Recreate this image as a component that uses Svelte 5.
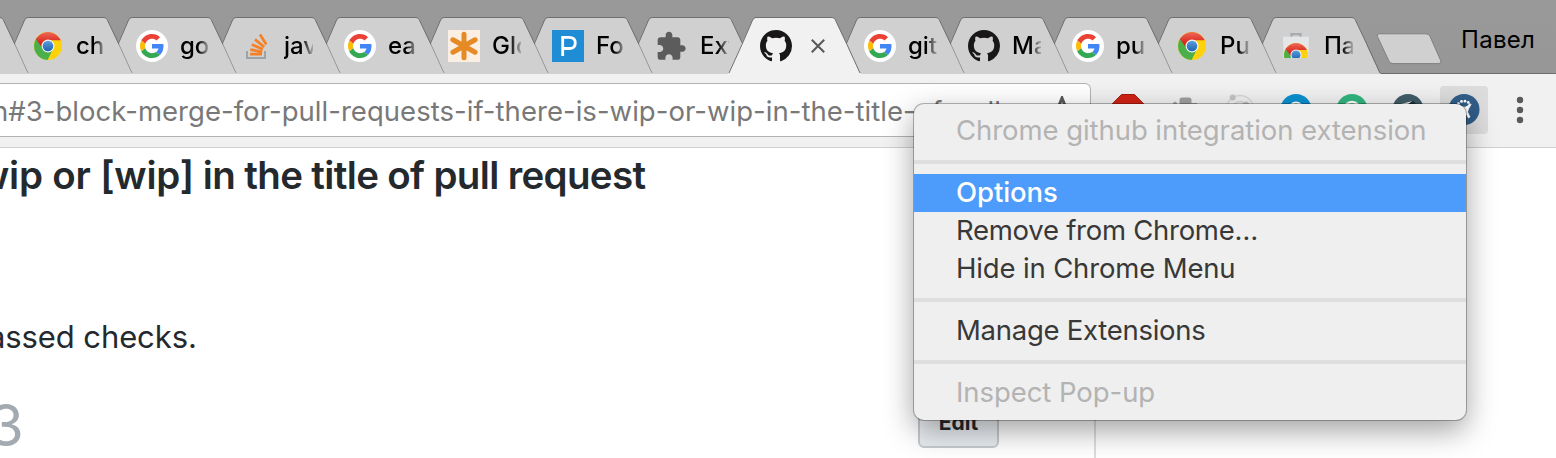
<script>
  const tabs = [
    { icon: 'none', title: '' },
    { icon: 'chrome', title: 'ch' },
    { icon: 'google', title: 'go' },
    { icon: 'stack', title: 'jav' },
    { icon: 'google', title: 'eas' },
    { icon: 'star', title: 'Glo' },
    { icon: 'p', title: 'Fo' },
    { icon: 'puzzle', title: 'Ext' },
    { icon: 'github', title: '', active: true },
    { icon: 'google', title: 'git' },
    { icon: 'github', title: 'Ma' },
    { icon: 'google', title: 'pu' },
    { icon: 'chrome', title: 'Pu' },
    { icon: 'store', title: 'Па' }
  ];
  const menu = [
    { label: 'Chrome github integration extension', kind: 'disabled' },
    null,
    { label: 'Options', kind: 'selected' },
    { label: 'Remove from Chrome…', kind: 'tighter' },
    { label: 'Hide in Chrome Menu', kind: 'tight' },
    null,
    { label: 'Manage Extensions', kind: 'tighter' },
    null,
    { label: 'Inspect Pop-up', kind: 'disabled' }
  ];
</script>

{#snippet chromeBall()}
  <circle cx="16" cy="16" r="14" fill="#fdd20a" />
  <path d="M3.9 9 A14 14 0 0 0 15.6 30 L21 19 L16 16 L11 19 L4.6 8 Z" fill="#4bb04a" />
  <path d="M3.9 9 A14 14 0 0 1 28.1 9 L28.7 10.3 H16 L11 19 Z" fill="url(#cred)" />
  <circle cx="16" cy="16" r="6.5" fill="#f4f6f8" />
  <circle cx="16" cy="16" r="5.3" fill="url(#cblue)" />
{/snippet}

<svg class="defs" aria-hidden="true">
  <defs>
    <linearGradient id="cred" x1="0" y1="0" x2="0" y2="1"><stop offset="0" stop-color="#ee6a5a" /><stop offset=".6" stop-color="#db2a20" /><stop offset="1" stop-color="#cf1c15" /></linearGradient>
    <linearGradient id="cblue" x1="0" y1="0" x2="0" y2="1"><stop offset="0" stop-color="#5c9edb" /><stop offset="1" stop-color="#1b64b4" /></linearGradient>
  </defs>
</svg>

<div class="window">
  <header class="strip">
    <div class="tabs">
      {#each tabs as tab, i}
        <div class="tab" class:active={tab.active} style="z-index: {tab.active ? 40 : 30 - i}">
          <svg class="shape" width="134" height="57" viewBox="0 0 134 57">
            <path class="fill" d="M0 57 L1 55.5 L24.6 3 Q25.8 .5 28 .5 H104 Q106.2 .5 107.2 2.6 L131.5 55.5 L133 57 Z" />
            <path class="low" d="M119 27.5 L132 56 M1 56 L14 27.5" />
            <path class="high" d="M14 27.5 L24.6 3 Q25.8 .5 28 .5 H104 Q106.2 .5 107.2 2.6 L119 27.5" />
            {#if i === tabs.length - 1}<path class="high" d="M119 27.5 L132 56" />{/if}
          </svg>
          <div class="content">
            {#if tab.icon === 'chrome'}
              <svg class="icon" viewBox="0 0 32 32">{@render chromeBall()}</svg>
            {:else if tab.icon === 'google'}
              <svg class="icon" viewBox="0 0 32 32">
                <circle cx="16" cy="16" r="16" fill="#fff" />
                <g transform="translate(4 4) scale(.5)">
                  <path fill="#EA4335" d="M24 9.5c3.54 0 6.71 1.22 9.21 3.6l6.85-6.85C35.9 2.38 30.47 0 24 0 14.62 0 6.51 5.38 2.56 13.22l7.98 6.19C12.43 13.72 17.74 9.5 24 9.5z" />
                  <path fill="#4285F4" d="M46.98 24.55c0-1.57-.15-3.09-.38-4.55H24v9.02h12.94c-.58 2.96-2.26 5.48-4.78 7.18l7.73 6c4.51-4.18 7.09-10.36 7.09-17.65z" />
                  <path fill="#FBBC05" d="M10.53 28.59c-.48-1.45-.76-2.99-.76-4.59s.27-3.14.76-4.59l-7.98-6.19C.92 16.46 0 20.12 0 24c0 3.88.92 7.54 2.56 10.78l7.97-6.19z" />
                  <path fill="#34A853" d="M24 48c6.48 0 11.93-2.13 15.89-5.81l-7.73-6c-2.15 1.45-4.92 2.3-8.16 2.3-6.26 0-11.57-4.22-13.47-9.91l-7.98 6.19C6.51 42.62 14.62 48 24 48z" />
                </g>
              </svg>
            {:else if tab.icon === 'stack'}
              <svg class="icon" viewBox="0 0 32 32" fill="none">
                <path d="M7 21 V28 H25 V21" stroke="#9ba1a6" stroke-width="1.9" />
                <path d="M10 24.1 H22 M10.3 19.6 L22.2 21.8 M11.8 14.6 L22.8 19.2 M15 9.4 L24.2 17 M20 4.6 L26.3 14.4" stroke="#f58025" stroke-width="2.7" />
              </svg>
            {:else if tab.icon === 'star'}
              <svg class="icon" viewBox="0 0 32 32">
                <rect width="32" height="32" fill="#fbefe4" />
                <path d="M16 4.2 V27.8 M4.9 9.8 L27.1 22.2 M27.1 9.8 L4.9 22.2" stroke="#e58a25" stroke-width="5" stroke-linecap="round" />
              </svg>
            {:else if tab.icon === 'p'}
              <svg class="icon" viewBox="0 0 32 32">
                <rect width="32" height="32" fill="#1f8dd6" />
                <path d="M10.7 26 V7.4 H17 Q23.3 7.4 23.3 12.9 Q23.3 18.5 17 18.5 H10.7" fill="none" stroke="#fff" stroke-width="2.8" />
              </svg>
            {:else if tab.icon === 'puzzle'}
              <svg class="icon" viewBox="0 0 32 32">
                <path transform="translate(-1 .5) scale(1.333)" fill="#5c5c5c" d="M20.5 11H19V7c0-1.1-.9-2-2-2h-4V3.5C13 2.12 11.88 1 10.5 1S8 2.12 8 3.5V5H4c-1.1 0-1.99.9-1.99 2v3.8H3.5c1.49 0 2.7 1.21 2.7 2.7s-1.21 2.7-2.7 2.7H2V20c0 1.1.9 2 2 2h3.8v-1.5c0-1.49 1.21-2.7 2.7-2.7 1.49 0 2.7 1.21 2.7 2.7V22H17c1.1 0 2-.9 2-2v-4h1.5c1.38 0 2.5-1.12 2.5-2.5S21.88 11 20.5 11z" />
              </svg>
            {:else if tab.icon === 'github'}
              <svg class="icon" viewBox="0 0 16 16">
                <path fill="#191717" fill-rule="evenodd" d="M8 0C3.58 0 0 3.58 0 8c0 3.54 2.29 6.53 5.47 7.59.4.07.55-.17.55-.38 0-.19-.01-.82-.01-1.49-2.01.37-2.53-.49-2.69-.94-.09-.23-.48-.94-.82-1.13-.28-.15-.68-.52-.01-.53.63-.01 1.08.58 1.23.82.72 1.21 1.87.87 2.33.66.07-.52.28-.87.51-1.07-1.78-.2-3.64-.89-3.64-3.95 0-.87.31-1.59.82-2.15-.08-.2-.36-1.02.08-2.12 0 0 .67-.21 2.2.82.64-.18 1.32-.27 2-.27s1.36.09 2 .27c1.53-1.04 2.2-.82 2.2-.82.44 1.1.16 1.92.08 2.12.51.56.82 1.27.82 2.15 0 3.07-1.87 3.75-3.65 3.95.29.25.54.73.54 1.48 0 1.07-.01 1.93-.01 2.2 0 .21.15.46.55.38A8.01 8.01 0 0 0 16 8c0-4.42-3.58-8-8-8z" />
              </svg>
            {:else if tab.icon === 'store'}
              <svg class="icon" viewBox="0 0 32 32">
                <path d="M11.5 7 V4.2 H20.5 V7" fill="none" stroke="#a9abad" stroke-width="2.2" />
                <path d="M3 6.8 H29 L28.3 28 H3.7 Z" fill="#e4e6e8" />
                <svg x="4" y="13" width="24" height="15" viewBox="2 2 28 17.5">{@render chromeBall()}</svg>
              </svg>
            {/if}
            {#if tab.active}
              <svg class="close" viewBox="0 0 14 14"><path d="M.8 .8 L13.2 13.2 M13.2 .8 L.8 13.2" stroke="#5a5a5a" stroke-width="2.1" /></svg>
            {:else}
              <span class="title">{tab.title}</span>
            {/if}
          </div>
        </div>
      {/each}
    </div>
    <svg class="newtab" width="66" height="32" viewBox="0 0 66 32">
      <path d="M3 .8 H50 Q52.8 .8 54 3.4 L64.6 27.4 Q65.6 30.4 63 30.6 H17 Q14.2 30.6 13 28.2 L1.4 3.4 Q.6 1 3 .8 Z" fill="#d0d0d0" stroke="#808080" stroke-width="1" />
    </svg>
    <span class="profile">Павел</span>
  </header>

  <div class="toolbar">
    <div class="omnibox">
      <span class="url">n#3-block-merge-for-pull-requests-if-there-is-wip-or-wip-in-the-title-of-pull</span>
      <svg class="bookmark" viewBox="0 0 32 32"><path d="M16 2 L20 12 L30 12.8 L22.4 19.4 L24.8 29.6 L16 24 L7.2 29.6 L9.6 19.4 L2 12.8 L12 12 Z" fill="none" stroke="#5a5a5a" stroke-width="3" /></svg>
    </div>
    <div class="extensions">
      <svg viewBox="0 0 32 32"><path d="M9.6 .5 H22.4 L31.5 9.6 V22.4 L22.4 31.5 H9.6 L.5 22.4 V9.6 Z" fill="#d22215" stroke="#9f1a10" /></svg>
      <svg viewBox="0 0 32 32"><rect x="11.5" y="3.5" width="12" height="14" rx="2.5" fill="#a0a0a0" /><path d="M5 16 V9 Q7 6 9 9 V16 Z M22 9 H29 V16 H22 Z" fill="#aaa" /></svg>
      <svg viewBox="0 0 32 32" fill="none" stroke="#d8d8d8" stroke-width="1.4"><circle cx="16" cy="15" r="13.5" /><circle cx="16" cy="15" r="7.5" /><circle cx="8.7" cy="3.5" r="3" fill="#c4c4c4" stroke="none" /><circle cx="22" cy="10.5" r="3" fill="#c4c4c4" stroke="none" /></svg>
      <svg viewBox="0 0 32 32"><circle cx="16" cy="15.5" r="15.5" fill="#0a90d0" /><circle cx="16" cy="15" r="6.5" fill="none" stroke="#fff" stroke-width="2" /></svg>
      <svg viewBox="0 0 32 32"><circle cx="16" cy="15.5" r="15.5" fill="#32b57f" /><circle cx="16" cy="16" r="8" fill="none" stroke="#fff" stroke-width="2.5" /></svg>
      <svg viewBox="0 0 32 32"><circle cx="16" cy="15.5" r="15.5" fill="#415d68" /><path d="M5 11 L21 7 L17 12 Z" fill="#fff" /><path d="M16 10 L21 6.5 L24 10 Z" fill="#22333b" /></svg>
      <div class="pressed">
        <svg viewBox="0 0 32 32"><circle cx="16" cy="15.5" r="15.5" fill="#305d88" /><path d="M15 24 L16.5 15 Q13 14 10 11 Q14 13 17 13.3 Q19 13 22 9.5 L23 10.5 Q20 15 19.5 18 L22 23 L20.5 24 L18 19.5 L16 24 Z" fill="#fff" stroke="#fff" stroke-width=".8" /><g fill="#fff"><circle cx="10.5" cy="9.5" r="1.3" /><circle cx="13.5" cy="7.4" r="1.4" /><circle cx="17" cy="7.2" r="1.4" /><circle cx="20.3" cy="8.4" r="1.3" /></g></svg>
      </div>
    </div>
    <svg class="dots" viewBox="0 0 8 28"><circle cx="4" cy="4" r="3.2" /><circle cx="4" cy="14" r="3.2" /><circle cx="4" cy="24" r="3.2" /></svg>
  </div>

  <main>
    <div class="article">
      <h2><span class="left">wip or [wip]</span><span class="right">in the title of pull request</span></h2>
      <p>assed checks.</p>
      <div class="issue"><span class="number">3</span><button>Edit</button></div>
    </div>
  </main>

  <div class="menu">
    {#each menu as item}
      {#if item}<div class="item {item.kind}">{item.label}</div>{:else}<div class="sep"></div>{/if}
    {/each}
  </div>
</div>

<style>
  :global(body) { margin: 0; overflow: hidden; }
  .defs { position: absolute; width: 0; height: 0; }
  .window { position: relative; width: 1556px; height: 458px; overflow: hidden; background: #fff; font-family: Inter, "Liberation Sans", sans-serif; display: flex; flex-direction: column; }
  .strip { box-sizing: border-box; height: 74px; flex: none; padding-top: 17px; background: linear-gradient(#999, #979797); border-bottom: 1px solid #6c6c6c; display: flex; align-items: flex-start; }
  .tabs { display: flex; margin-left: -104px; flex: none; position: relative; }
  .tab { position: relative; width: 132px; height: 56px; margin-right: -28px; flex: none; }
  .tab.active { height: 57px; }
  .shape { position: absolute; left: 0; top: 0; display: block; }
  .fill { fill: #d0d0d0; }
  .active .fill { fill: #f1f1f1; }
  .low { stroke: #979797; fill: none; }
  .high, .active .low { stroke: #6f6f6f; fill: none; }
  .content { position: relative; display: flex; align-items: center; padding: 13px 0 0 32px; height: 32px; }
  .icon { width: 32px; height: 32px; flex: none; display: block; }
  .title { margin-left: 12px; width: 29px; flex: none; overflow: hidden; white-space: nowrap; font-size: 24px; font-weight: 450; line-height: 32px; color: #000; -webkit-mask-image: linear-gradient(90deg, #000 62%, transparent 108%); mask-image: linear-gradient(90deg, #000 62%, transparent 108%); }
  .close { width: 14px; height: 14px; margin-left: 19px; }
  .newtab { margin: 16px 0 0 24px; flex: none; }
  .profile { margin: 8px 0 0 19px; font-size: 24px; line-height: 30px; letter-spacing: .3px; color: #000; }

  .toolbar { box-sizing: border-box; height: 74px; flex: none; background: #f1f1f1; border-bottom: 1px solid #cfcfcf; padding-top: 9px; display: flex; align-items: flex-start; }
  .omnibox { box-sizing: border-box; width: 1091px; height: 54px; background: #fff; border: 1px solid #b3b3b3; border-left: 0; border-radius: 0 6px 6px 0; display: flex; align-items: center; overflow: hidden; flex: none; }
  .url { width: 1016px; margin-left: -8px; font-size: 27.5px; line-height: 52px; letter-spacing: .04px; color: #787878; white-space: nowrap; flex: none; margin-top: 1px; overflow: hidden; }
  .bookmark { width: 32px; height: 32px; margin-left: 38px; margin-top: 4px; flex: none; }
  .extensions { display: flex; gap: 24px; margin: 11px 0 0 21px; }
  .extensions svg { width: 32px; height: 32px; display: block; flex: none; }
  .pressed { margin: -8px; padding: 8px; background: #dcdcdc; border-radius: 4px; }
  .dots { width: 8px; height: 28px; margin: 13px 0 0 36px; fill: #5a5a5a; }

  main { flex: 1; display: flex; min-height: 0; }
  .article { box-sizing: border-box; width: 1096px; border-right: 2px solid #ddd; color: #24292e; display: flex; flex-direction: column; }
  h2 { margin: 2px 0 0 -23px; font-size: 38.5px; font-weight: 600; line-height: 50px; white-space: nowrap; display: flex; gap: 9px; }
  .left { letter-spacing: -.2px; }
  .right { letter-spacing: -.65px; }
  p { margin: 115px 0 0 -12px; font-size: 31px; line-height: 44px; letter-spacing: -.1px; }
  .issue { display: flex; justify-content: space-between; align-items: flex-start; margin-top: 40px; padding-right: 95px; }
  .number { margin: -4px 0 0 -12px; font-size: 58px; font-weight: 400; line-height: 60px; color: #a3aab1; }
  button { box-sizing: border-box; width: 81px; height: 50px; margin-top: -1px; padding: 0; border: 2px solid #c5c9ce; border-radius: 6px; background: linear-gradient(#fafbfc, #e6ebf0); font: 700 21px/44px Inter, sans-serif; color: #24292e; }

  .menu { position: absolute; z-index: 60; left: 914px; top: 104px; width: 552px; height: 316px; box-sizing: border-box; padding-top: 8px; background: #efefef; border-radius: 10px; box-shadow: 0 0 0 1px rgba(0,0,0,.28), 0 10px 30px rgba(0,0,0,.38); }
  .item { height: 38px; padding-left: 42px; font-size: 27.5px; line-height: 37px; color: #383838; white-space: nowrap; }
  .disabled { color: #b3b3b3; letter-spacing: -.06px; }
  .selected { background: #4d9bfb; color: #fff; font-weight: 450; letter-spacing: -.1px; }
  .tight { letter-spacing: -.15px; }
  .tighter { letter-spacing: -.27px; }
  .sep { height: 4px; margin: 10px 0; background: #dedede; }
</style>
